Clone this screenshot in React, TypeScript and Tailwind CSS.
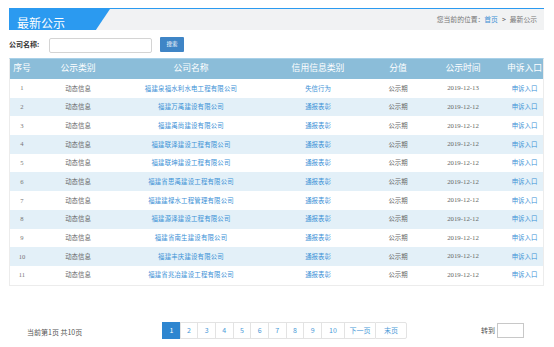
import React from "react";

const rows: [string, string][] = [
  ["福建泉福水利水电工程有限公司", "失信行为"],
  ["福建万禹建设有限公司", "通报表彰"],
  ["福建禹尚建设有限公司", "通报表彰"],
  ["福建联泽建设工程有限公司", "通报表彰"],
  ["福建联坤建设工程有限公司", "通报表彰"],
  ["福建省思禹建设工程有限公司", "通报表彰"],
  ["福建建禄水工程管理有限公司", "通报表彰"],
  ["福建源泽建设工程有限公司", "通报表彰"],
  ["福建省南生建设有限公司", "通报表彰"],
  ["福建丰庆建设有限公司", "通报表彰"],
  ["福建省兆冶建设工程有限公司", "通报表彰"],
];

const cols = "grid grid-cols-[24px_88px_138px_116px_44px_86px_1fr]";

export default function App() {
  return (
    <div
      className="w-[554px] h-[347px] bg-white overflow-hidden"
      style={{ fontFamily: '"Noto Sans CJK SC", "Noto Sans", sans-serif' }}
    >
      <div className="ml-[9px] w-[535px] pt-[8px]">
        {/* header */}
        <div className="border-t-[1.5px] border-[#2b9af0] bg-[#f1f2f3] h-[22px] flex items-center justify-between">
          <div className="relative h-full w-[101px]">
            <div className="absolute inset-0 bg-[#2b9af0] [clip-path:polygon(0_0,100%_0,86%_100%,0_100%)]" />
            <span className="relative pl-[8px] leading-[22px] text-[12px] text-white">最新公示</span>
          </div>
          <div className="pr-[7px] text-[6.8px] text-[#777] flex items-center">
            <span>您当前的位置：</span>
            <span className="text-[#3b8fd4]">首页</span>
            <span className="mx-[4px] text-[#555] text-[7px]">&gt;</span>
            <span>最新公示</span>
          </div>
        </div>

        {/* search */}
        <div className="flex items-center h-[28px]">
          <span className="text-[7px] font-bold text-[#333] w-[40px]">公司名称:</span>
          <div className="w-[103px] h-[15px] mt-[2px] border border-[#d4d4d4] rounded-[2px] bg-white" />
          <div className="ml-[8px] w-[24px] h-[15px] bg-[#3f85c6] rounded-[1px] text-white text-[5.5px] flex items-center justify-center">
            搜索
          </div>
        </div>

        {/* table */}
        <div className="border-t border-[#a8d0e8] border-x border-b border-x-[#ececec] border-b-[#ececec]">
          <div className={`${cols} h-[20px] bg-[#8bbdd9] text-white text-[8.8px] items-center text-center`} style={{ fontFamily: '"Liberation Serif", "Noto Sans CJK SC", serif' }}>
            <span>序号</span>
            <span>公示类别</span>
            <span>公司名称</span>
            <span>信用信息类别</span>
            <span>分值</span>
            <span>公示时间</span>
            <span>申诉入口</span>
          </div>
          {rows.map(([name, type], i) => (
            <div
              key={i}
              className={`${cols} h-[18.7px] items-center text-center text-[6.4px] ${i % 2 === 1 ? "bg-[#e3f0f8]" : "bg-white"}`}
            >
              <span className="text-[#777] text-[6.6px]" style={{ fontFamily: '"Liberation Serif", serif' }}>{i + 1}</span>
              <span className="text-[#666]">动态信息</span>
              <span className="text-[#3a90d6] tracking-[0.2px]">{name}</span>
              <span className="text-[#3a90d6]">{type}</span>
              <span className="text-[#666]">公示期</span>
              <span className="text-[#666] text-[6.8px]" style={{ fontFamily: '"Liberation Serif", serif' }}>
                {i === 0 ? "2019-12-13" : "2019-12-12"}
              </span>
              <span className="text-[#3a90d6]">申诉入口</span>
            </div>
          ))}
        </div>

        {/* pagination */}
        <div className="relative h-[62px]">
          <span className="absolute left-[18px] top-[41px] text-[7px] text-[#555]">当前第1页 共10页</span>
          <div className="absolute left-[153px] top-[36px] flex h-[17px] text-[7px] text-[#4a9ad8]">
            {["1", "2", "3", "4", "5", "6", "7", "8", "9"].map((n, i) => (
              <div
                key={n}
                className={`w-[17.67px] flex items-center justify-center border-y border-l ${i === 0 ? "bg-[#2e86d0] text-white border-[#2e86d0]" : "border-[#e3e3e3]"}`}
              >
                {n}
              </div>
            ))}
            <div className="w-[23px] flex items-center justify-center border-y border-l border-[#e3e3e3]">10</div>
            <div className="w-[31px] flex items-center justify-center border-y border-l border-[#e3e3e3]">下一页</div>
            <div className="w-[32px] flex items-center justify-center border border-[#e3e3e3] rounded-r-[2px]">末页</div>
          </div>
          <div className="absolute left-[472px] top-[37px] flex items-center">
            <span className="text-[7px] text-[#555] mr-[2px]">转到</span>
            <div className="w-[27px] h-[15px] border border-[#c8c8c8] bg-white" />
          </div>
        </div>
      </div>
    </div>
  );
}
